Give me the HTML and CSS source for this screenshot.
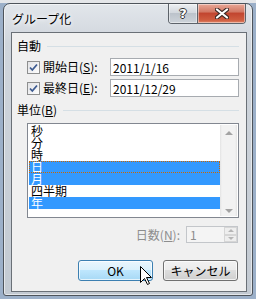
FILE: index.html
```html
<!DOCTYPE html>
<html lang="ja">
<head>
  <meta charset="UTF-8">
  <title>グループ化</title>
  <link rel="stylesheet" href="styles.css">
</head>
<body>
  <div class="window">
    <div class="titlebar">
      <span class="title">グループ化</span>
      <div class="caption-buttons">
        <div class="cap-btn help">?</div>
        <div class="cap-btn close">
          <svg width="14" height="11" viewBox="0 0 14 11">
            <path d="M2 1.5 L12 9.5 M12 1.5 L2 9.5" stroke="#3b2a26" stroke-width="4.2" stroke-linecap="round"/>
            <path d="M2 1.5 L12 9.5 M12 1.5 L2 9.5" stroke="#fff" stroke-width="2.2" stroke-linecap="round"/>
          </svg>
        </div>
      </div>
    </div>

    <div class="client">
      <div class="section"><span>自動</span><div class="rule"></div></div>

      <div class="date-row">
        <span class="check">
          <svg width="11" height="11" viewBox="0 0 11 11"><path d="M2 5.5 L4.3 8 L9 2.5" fill="none" stroke="#3d5b91" stroke-width="1.8"/></svg>
        </span>
        <span class="date-label">開始日(<u>S</u>):</span>
        <input class="text-box" type="text" value="2011/1/16">
      </div>

      <div class="date-row second">
        <span class="check">
          <svg width="11" height="11" viewBox="0 0 11 11"><path d="M2 5.5 L4.3 8 L9 2.5" fill="none" stroke="#3d5b91" stroke-width="1.8"/></svg>
        </span>
        <span class="date-label">最終日(<u>E</u>):</span>
        <input class="text-box" type="text" value="2011/12/29">
      </div>

      <div class="section unit"><span>単位(<u>B</u>)</span><div class="rule"></div></div>

      <div class="listbox">
        <ul class="items">
          <li>秒</li>
          <li>分</li>
          <li>時</li>
          <li class="selected focused">日</li>
          <li class="selected">月</li>
          <li>四半期</li>
          <li class="selected">年</li>
        </ul>
        <div class="scrollbar">
          <span class="arrow up"></span>
          <span class="arrow down"></span>
        </div>
      </div>

      <div class="days-row">
        <span class="days-label">日数(<u>N</u>):</span>
        <div class="spin">
          <span class="spin-value">1</span>
          <div class="spin-buttons">
            <span class="spin-btn"><span class="arrow up"></span></span>
            <span class="spin-btn"><span class="arrow down"></span></span>
          </div>
        </div>
      </div>

      <div class="buttons">
        <button class="btn default">OK</button>
        <button class="btn">キャンセル</button>
      </div>
    </div>
  </div>

  <svg class="cursor" width="13" height="20" viewBox="0 0 13 20">
    <polygon points="0.5,0.5 0.5,16.5 4.5,12.5 7.5,18.5 9.5,17.5 6.5,11.5 11.5,11.5" fill="#fff" stroke="#000" stroke-width="1"/>
  </svg>
</body>
</html>
```

FILE: styles.css
```css
body {
  margin: 0;
  padding: 3px 0 0 3px;
  height: 299px;
  box-sizing: border-box;
  overflow: hidden;
  position: relative;
  font-family: "Noto Sans CJK JP", "Noto Sans", sans-serif;
  font-size: 12px;
  background: linear-gradient(#e4e6e9 0, #e4e6e9 3px, #9cb0c9 3px);
}

.window {
  width: 250px;
  height: 293px;
  box-sizing: border-box;
  border: 1px solid #4e545b;
  border-radius: 7px 7px 3px 3px;
  background: linear-gradient(#e2e6eb, #cfd5dc 40px, #c3cad2);
  box-shadow: inset 0 0 0 1px rgba(255, 255, 255, 0.55);
  display: flex;
  flex-direction: column;
}

.titlebar {
  height: 28px;
  display: flex;
  align-items: flex-start;
  padding-left: 8px;
}
.title {
  margin-top: 8px;
  line-height: 13px;
  color: #000;
  text-shadow: 0 0 4px #fff, 0 0 6px #fff;
}

.caption-buttons {
  margin-left: auto;
  margin-right: 6px;
  display: flex;
  height: 19px;
  border: 1px solid #5d636a;
  border-top: none;
  border-radius: 0 0 4px 4px;
  overflow: hidden;
}
.cap-btn {
  height: 19px;
  display: flex;
  align-items: center;
  justify-content: center;
  box-shadow: inset 0 0 0 1px rgba(255, 255, 255, 0.45);
}
.help {
  width: 28px;
  border-right: 1px solid #5d636a;
  background: linear-gradient(#eceff2, #d3d8de 45%, #bcc3cb 50%, #cdd3d9);
  color: #fff;
  font-family: "DejaVu Sans", sans-serif;
  font-weight: bold;
  font-size: 13px;
  text-shadow: -1px 0 #333, 1px 0 #333, 0 -1px #333, 0 1px #333;
}
.close {
  width: 47px;
  background: linear-gradient(#e9a898, #d37a66 40%, #c24630 50%, #cf5d40 85%, #e0876a);
}

.client {
  flex: 1;
  margin: 0 5px 3px 7px;
  border: 1px solid #6a7077;
  background: #f0f0f0;
  display: flex;
  flex-direction: column;
}

.section {
  display: flex;
  align-items: center;
  height: 12px;
  line-height: 12px;
  margin: 7px 7px 0 5px;
}
.section.unit {
  margin-top: 7px;
}
.rule {
  flex: 1;
  height: 1px;
  margin-left: 6px;
  background: #d5dfe5;
}

.date-row {
  display: flex;
  align-items: center;
  height: 18px;
  margin: 6px 7px 0 15px;
}
.date-row.second {
  margin-top: 3px;
}
.check {
  width: 13px;
  height: 13px;
  box-sizing: border-box;
  border: 1px solid #8e8f8f;
  background: linear-gradient(135deg, #e2e3e6, #fdfdfd);
  display: flex;
  align-items: center;
  justify-content: center;
}
.date-label {
  flex: 1;
  margin-left: 3px;
  line-height: 12px;
}
.text-box {
  width: 129px;
  height: 18px;
  box-sizing: border-box;
  margin: 0;
  padding: 0 2px;
  border: 1px solid #a7abb0;
  background: #fff;
  font-family: "Noto Sans CJK JP", sans-serif;
  font-size: 12px;
  color: #000;
}

.listbox {
  display: flex;
  height: 95px;
  box-sizing: border-box;
  margin: 7px 7px 0 15px;
  padding: 1px;
  border: 1px solid #828790;
  background: #fff;
}
.items {
  flex: 1;
  list-style: none;
  margin: 0;
  padding: 0;
}
.items li {
  height: 12px;
  line-height: 12px;
  padding-left: 2px;
}
.items li.selected {
  background: #3399ff;
  color: #fff;
}
.items li.focused {
  outline: 1px dotted #cc6600;
  outline-offset: -1px;
}

.scrollbar {
  width: 17px;
  display: flex;
  flex-direction: column;
  justify-content: space-between;
  align-items: center;
  padding: 6px 0 3px;
  box-sizing: border-box;
  background: linear-gradient(to right, #e3e3e3, #f2f2f2 2px, #f2f2f2 15px, #e3e3e3);
}
.arrow {
  width: 0;
  height: 0;
  border-left: 4px solid transparent;
  border-right: 4px solid transparent;
}
.arrow.up {
  border-bottom: 4px solid #a3a3a3;
}
.arrow.down {
  border-top: 4px solid #a3a3a3;
}

.days-row {
  display: flex;
  justify-content: flex-end;
  align-items: center;
  height: 17px;
  margin: 8px 8px 0 0;
}
.days-label {
  color: #8d8d8d;
  margin-right: 6px;
}
.spin {
  width: 52px;
  height: 17px;
  box-sizing: border-box;
  border: 1px solid #c3c6ca;
  background: #f4f4f4;
  display: flex;
  align-items: center;
}
.spin-value {
  flex: 1;
  padding-left: 3px;
  color: #8d8d8d;
}
.spin-buttons {
  width: 13px;
  height: 15px;
  display: flex;
  flex-direction: column;
}
.spin-btn {
  flex: 1;
  display: flex;
  align-items: center;
  justify-content: center;
  border: 1px solid #d6d6d6;
  background: #eeeeee;
}
.spin-btn .arrow {
  border-left-width: 3px;
  border-right-width: 3px;
}
.spin-btn .arrow.up {
  border-bottom: 3px solid #b5b5b5;
}
.spin-btn .arrow.down {
  border-top: 3px solid #b5b5b5;
}

.buttons {
  display: flex;
  justify-content: flex-end;
  gap: 10px;
  margin: 17px 8px 0 0;
}
.btn {
  width: 75px;
  height: 21px;
  padding: 0;
  border: 1px solid #707070;
  border-radius: 3px;
  background: linear-gradient(#f2f2f2, #ebebeb 50%, #dddddd 50%, #cfcfcf);
  box-shadow: inset 0 0 0 1px rgba(255, 255, 255, 0.7);
  font-family: "Noto Sans CJK JP", sans-serif;
  font-size: 12px;
  color: #000;
}
.btn.default {
  border-color: #3c7fb1;
  background: linear-gradient(#eaf6fd, #d9f0fc 50%, #bee6fd 50%, #a7d9f5);
}

.cursor {
  position: absolute;
  left: 140px;
  top: 266px;
}
```
